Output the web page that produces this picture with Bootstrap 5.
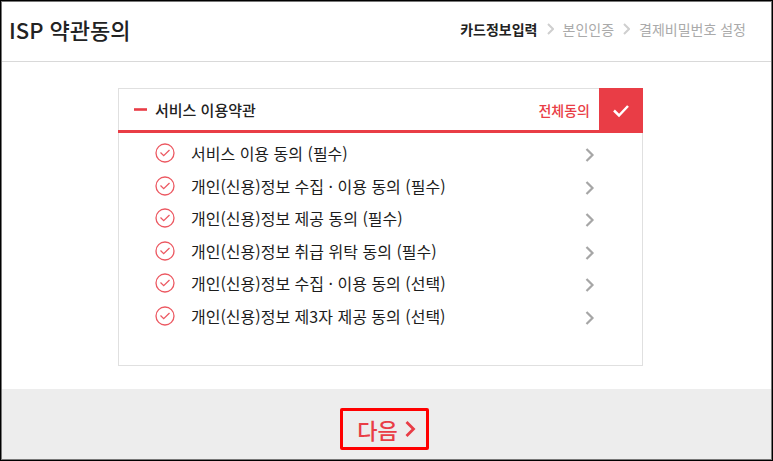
<!DOCTYPE html>
<html lang="ko">
<head>
<meta charset="utf-8">
<meta name="viewport" content="width=device-width, initial-scale=1">
<title>ISP 약관동의</title>
<link href="https://cdn.jsdelivr.net/npm/bootstrap@5.3.0/dist/css/bootstrap.min.css" rel="stylesheet">
<style>
  :root { --accent: #e93d46; --rule: #e0e0e0; }
  body { font-family: "Noto Sans CJK KR", sans-serif; color: #222; background: #fff; }
  button, input { font-family: inherit; }
  svg { display: block; flex: none; fill: none; }
  .page-frame { border: 1px solid #000; outline: 1px solid #777; outline-offset: -2px; }
  .page-head { padding: 0 26px 4px 8px; height: 61px; border-bottom: 1px solid #d9d9d9; }
  .page-title { font-size: 22px; line-height: 32px; font-weight: 500; }
  .steps { font-size: 14px; line-height: 20px; color: #aaa; gap: 9px; }
  .steps .current { color: #222; font-weight: 700; }
  .content-area { padding: 26px 12px 22px 0; }
  .terms { max-width: 525px; border: 1px solid var(--rule); padding-bottom: 33px; }
  .terms-head { height: 45px; margin: -1px -1px 0; border-top: 1px solid var(--rule); border-bottom: 3px solid var(--accent); }
  .fold { font-size: 15px; line-height: 22px; font-weight: 500; color: #222; gap: 8px; padding: 0 0 0 16px; }
  .agree-all { font-size: 14px; line-height: 20px; color: var(--accent); gap: 9px; font-weight: 500; }
  .agree-all input { appearance: none; width: 44px; height: 45px; margin: -1px 0 -3px; background: var(--accent) url("data:image/svg+xml,%3Csvg xmlns='http://www.w3.org/2000/svg' viewBox='0 0 18 14'%3E%3Cpath d='M2 6.5l5 5L16 2' fill='none' stroke='%23fff' stroke-width='2.5'/%3E%3C/svg%3E") center/18px 14px no-repeat; }
  .term-list { padding: 3px 47px 0 36px; }
  .term-row { height: 33px; }
  .term-row + .term-row { margin-top: -1px; }
  .term-row + .term-row:nth-child(even) { margin-top: 0; }
  .term-label { font-size: 16px; line-height: 24px; gap: 16px; color: #1c1c1c; }
  .term-label input { appearance: none; width: 20px; height: 20px; margin: 0; background: url("data:image/svg+xml,%3Csvg xmlns='http://www.w3.org/2000/svg' viewBox='0 0 20 20' fill='none' stroke='%23ec5962' stroke-width='1.3'%3E%3Ccircle cx='10' cy='10' r='9'/%3E%3Cpath d='M5.5 9.5l3.2 3.2L14.5 7'/%3E%3C/svg%3E") center/20px no-repeat; }
  .detail { padding: 4px 0 0; }
  .page-foot { background: #ededed; padding: 19px 4px 9px 0; min-height: 71px; }
  .next { border: 3px solid #f00; border-radius: 2px; width: 89px; height: 42px; padding: 0 0 0 4px; font-size: 22px; line-height: 32px; color: var(--accent); gap: 7px; font-weight: 500; }
</style>
<script src="https://cdn.jsdelivr.net/npm/bootstrap@5.3.0/dist/js/bootstrap.bundle.min.js" defer></script>
</head>
<body>
<div class="page-frame d-flex flex-column min-vh-100">
  <header class="page-head d-flex align-items-center justify-content-between">
    <h1 class="page-title m-0">ISP 약관동의</h1>
    <ol class="steps list-unstyled d-flex align-items-center m-0">
      <li class="current" aria-current="step">카드정보입력</li>
      <li aria-hidden="true"><svg width="7" height="12" stroke="#cfcfcf" stroke-width="2"><path d="M1 1l5 5-5 5"/></svg></li>
      <li>본인인증</li>
      <li aria-hidden="true"><svg width="7" height="12" stroke="#cfcfcf" stroke-width="2"><path d="M1 1l5 5-5 5"/></svg></li>
      <li>결제비밀번호 설정</li>
    </ol>
  </header>
  <main class="content-area flex-grow-1">
    <section class="terms mx-auto">
      <div class="terms-head d-flex align-items-center justify-content-between">
        <button type="button" class="fold btn border-0 rounded-0 d-flex align-items-center" aria-expanded="true">
          <svg width="13" height="3"><path d="M0 1.5h13" stroke="#e93d46" stroke-width="2.6"/></svg>서비스 이용약관
        </button>
        <label class="agree-all d-flex align-items-center">전체동의 <input type="checkbox" checked></label>
      </div>
      <ul class="term-list list-unstyled m-0">
        <li class="term-row d-flex align-items-center justify-content-between"><label class="term-label d-flex align-items-center"><input type="checkbox" checked>서비스 이용 동의 (필수)</label><button type="button" class="detail btn border-0" aria-label="서비스 이용 동의 보기"><svg width="10" height="14" stroke="#a6a6a6" stroke-width="2.2"><path d="M1.5 1l6 6-6 6"/></svg></button></li>
        <li class="term-row d-flex align-items-center justify-content-between"><label class="term-label d-flex align-items-center"><input type="checkbox" checked>개인(신용)정보 수집 · 이용 동의 (필수)</label><button type="button" class="detail btn border-0" aria-label="필수 수집 이용 동의 보기"><svg width="10" height="14" stroke="#a6a6a6" stroke-width="2.2"><path d="M1.5 1l6 6-6 6"/></svg></button></li>
        <li class="term-row d-flex align-items-center justify-content-between"><label class="term-label d-flex align-items-center"><input type="checkbox" checked>개인(신용)정보 제공 동의 (필수)</label><button type="button" class="detail btn border-0" aria-label="제공 동의 보기"><svg width="10" height="14" stroke="#a6a6a6" stroke-width="2.2"><path d="M1.5 1l6 6-6 6"/></svg></button></li>
        <li class="term-row d-flex align-items-center justify-content-between"><label class="term-label d-flex align-items-center"><input type="checkbox" checked>개인(신용)정보 취급 위탁 동의 (필수)</label><button type="button" class="detail btn border-0" aria-label="취급 위탁 동의 보기"><svg width="10" height="14" stroke="#a6a6a6" stroke-width="2.2"><path d="M1.5 1l6 6-6 6"/></svg></button></li>
        <li class="term-row d-flex align-items-center justify-content-between"><label class="term-label d-flex align-items-center"><input type="checkbox" checked>개인(신용)정보 수집 · 이용 동의 (선택)</label><button type="button" class="detail btn border-0" aria-label="선택 수집 이용 동의 보기"><svg width="10" height="14" stroke="#a6a6a6" stroke-width="2.2"><path d="M1.5 1l6 6-6 6"/></svg></button></li>
        <li class="term-row d-flex align-items-center justify-content-between"><label class="term-label d-flex align-items-center"><input type="checkbox" checked>개인(신용)정보 제3자 제공 동의 (선택)</label><button type="button" class="detail btn border-0" aria-label="제3자 제공 동의 보기"><svg width="10" height="14" stroke="#a6a6a6" stroke-width="2.2"><path d="M1.5 1l6 6-6 6"/></svg></button></li>
      </ul>
    </section>
  </main>
  <footer class="page-foot d-flex justify-content-center">
    <button type="button" class="next btn d-flex align-items-center justify-content-center">다음<svg width="11" height="16" stroke="#e93d46" stroke-width="2.8"><path d="M1.5 1l7 7-7 7"/></svg></button>
  </footer>
</div>
</body>
</html>
